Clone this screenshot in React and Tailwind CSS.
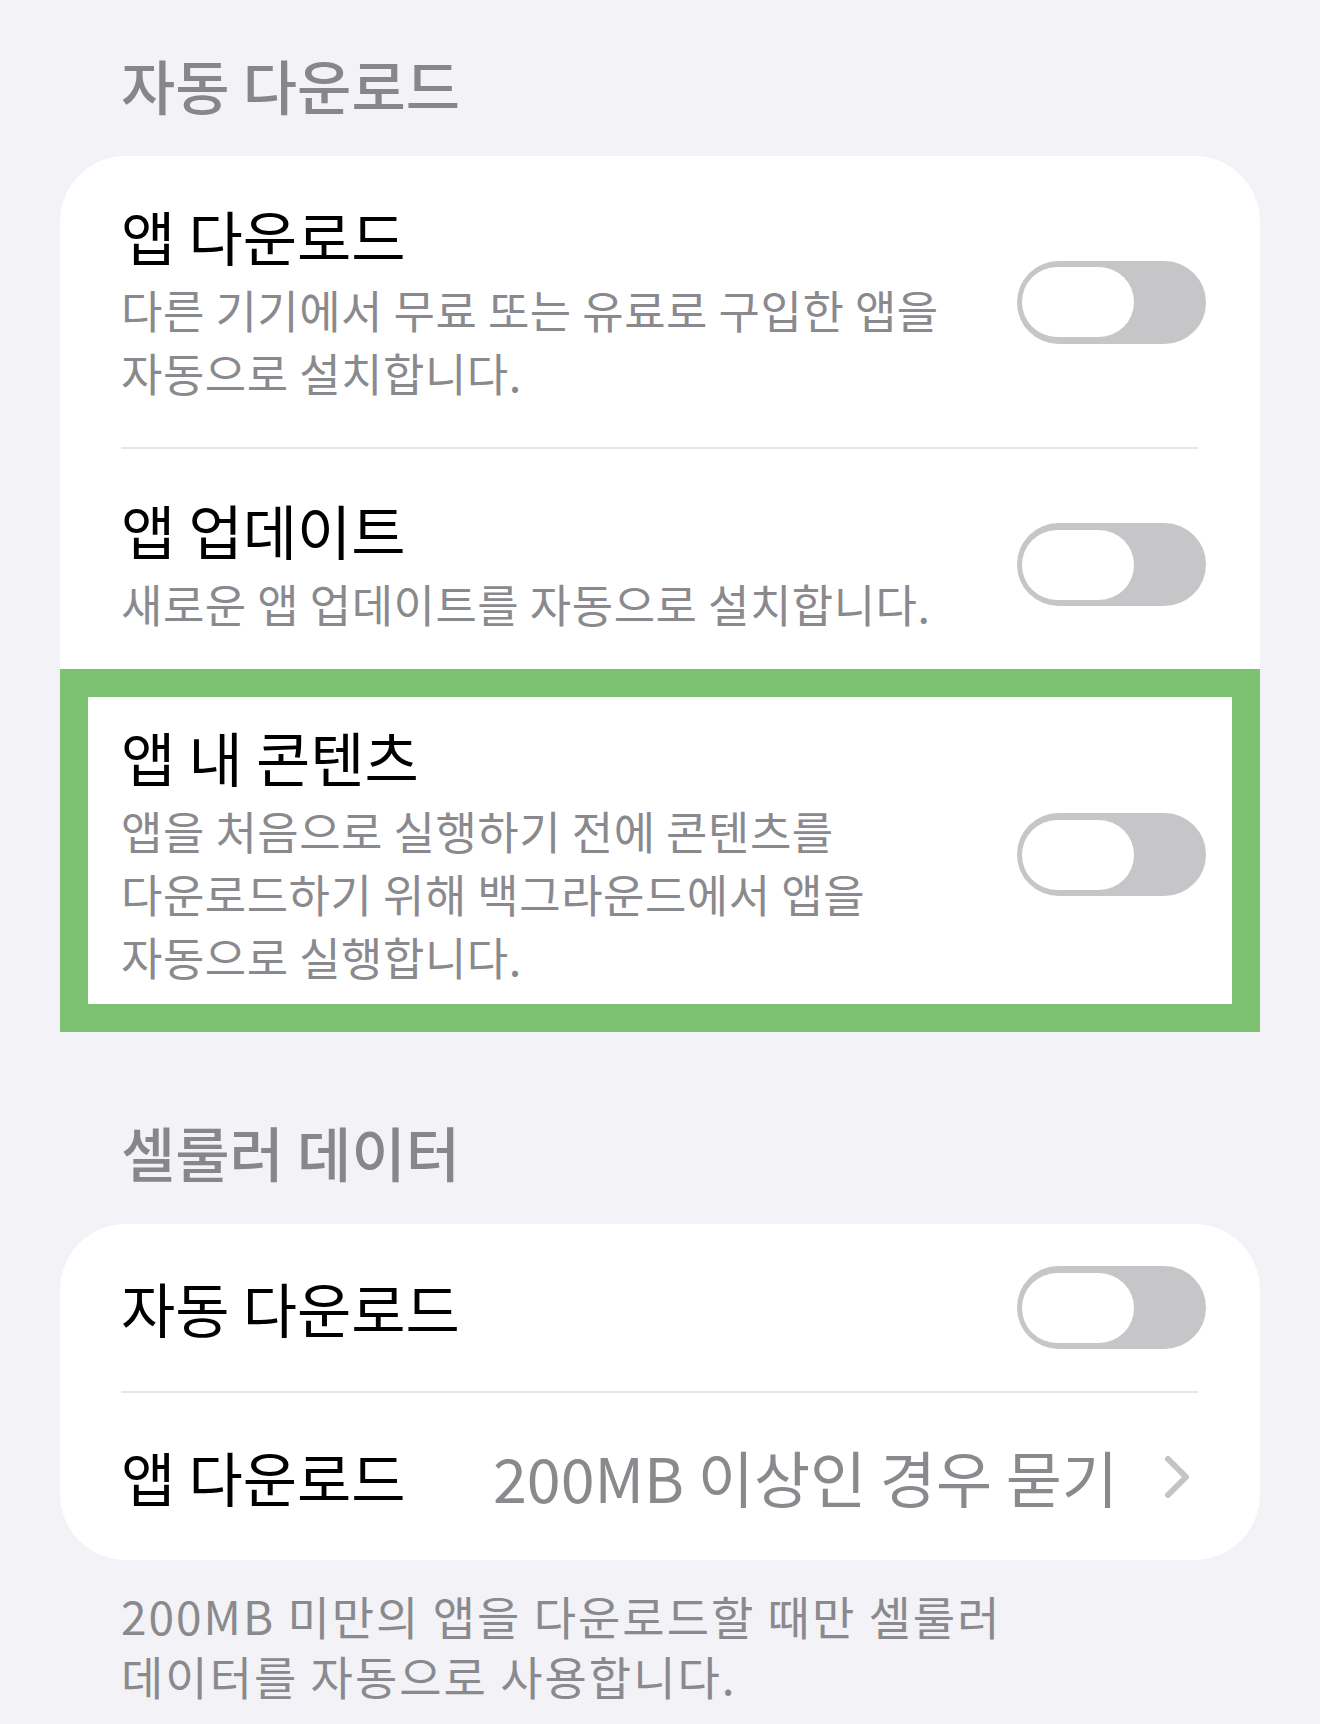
const font = { fontFamily: '"Noto Sans CJK KR", "Noto Sans", sans-serif' };

function Toggle() {
  return (
    <div className="shrink-0 w-[189px] h-[83px] rounded-full bg-[#c6c6c8] flex items-center pl-[5px]">
      <div className="w-[112px] h-[70px] rounded-full bg-white" />
    </div>
  );
}

function Chevron() {
  return (
    <svg width="30" height="46" viewBox="0 0 30 46" className="shrink-0">
      <path d="M6 5 L24 23 L6 41" fill="none" stroke="#c4c4c6" strokeWidth="6" strokeLinecap="round" strokeLinejoin="round" />
    </svg>
  );
}

function ToggleRow({ title, lines, className }) {
  return (
    <div className={`flex items-center justify-between ${className}`}>
      <div>
        <div className="text-[59px] leading-[72px] text-black">{title}</div>
        <div className="mt-[6px] text-[45px] leading-[63px] text-[#8a8a8e] tracking-[0.5px]">
          {lines.map((l) => (
            <div key={l}>{l}</div>
          ))}
        </div>
      </div>
      <Toggle />
    </div>
  );
}

function SectionHeader({ children, className }) {
  return (
    <div className={`pl-[61px] text-[59px] leading-[72px] font-medium text-[#87878b] ${className}`}>
      {children}
    </div>
  );
}

export default function App() {
  return (
    <div className="min-h-[1724px] w-full bg-[#f2f2f7] px-[60px] pt-[49px]" style={font}>
      <SectionHeader>자동 다운로드</SectionHeader>

      <div className="mt-[35px] bg-white rounded-t-[66px]">
        <div className="pl-[61px] pr-[54px]">
          <ToggleRow
            className="pt-[44px] pb-[43px]"
            title="앱 다운로드"
            lines={['다른 기기에서 무료 또는 유료로 구입한 앱을', '자동으로 설치합니다.']}
          />
        </div>
        <div className="ml-[61px] mr-[62px] h-[2px] bg-[#e5e5ea]" />
        <div className="pl-[61px] pr-[54px]">
          <ToggleRow
            className="pt-[45px] pb-[34px]"
            title="앱 업데이트"
            lines={['새로운 앱 업데이트를 자동으로 설치합니다.']}
          />
        </div>
      </div>

      <div className="border-[28px] border-[#7dc273] bg-white pl-[33px] pr-[26px]">
        <ToggleRow
          className="pt-[24px] pb-[16px]"
          title="앱 내 콘텐츠"
          lines={['앱을 처음으로 실행하기 전에 콘텐츠를', '다운로드하기 위해 백그라운드에서 앱을', '자동으로 실행합니다.']}
        />
      </div>

      <SectionHeader className="mt-[84px]">셀룰러 데이터</SectionHeader>

      <div className="mt-[36px] bg-white rounded-[66px]">
        <div className="h-[167px] pl-[61px] pr-[54px] flex items-center justify-between">
          <div className="text-[59px] leading-[72px] text-black">자동 다운로드</div>
          <Toggle />
        </div>
        <div className="ml-[61px] mr-[62px] h-[2px] bg-[#e5e5ea]" />
        <div className="h-[167px] pl-[61px] pr-[68px] flex items-center">
          <div className="text-[59px] leading-[72px] text-black">앱 다운로드</div>
          <div className="ml-auto text-[61px] leading-[72px] text-[#8a8a8e]">200MB 이상인 경우 묻기</div>
          <div className="ml-[44px]">
            <Chevron />
          </div>
        </div>
      </div>

      <div className="mt-[25px] pl-[61px] text-[46px] leading-[60px] text-[#8a8a8e] tracking-[2px]">
        <div>200MB 미만의 앱을 다운로드할 때만 셀룰러</div>
        <div>데이터를 자동으로 사용합니다.</div>
      </div>
    </div>
  );
}
